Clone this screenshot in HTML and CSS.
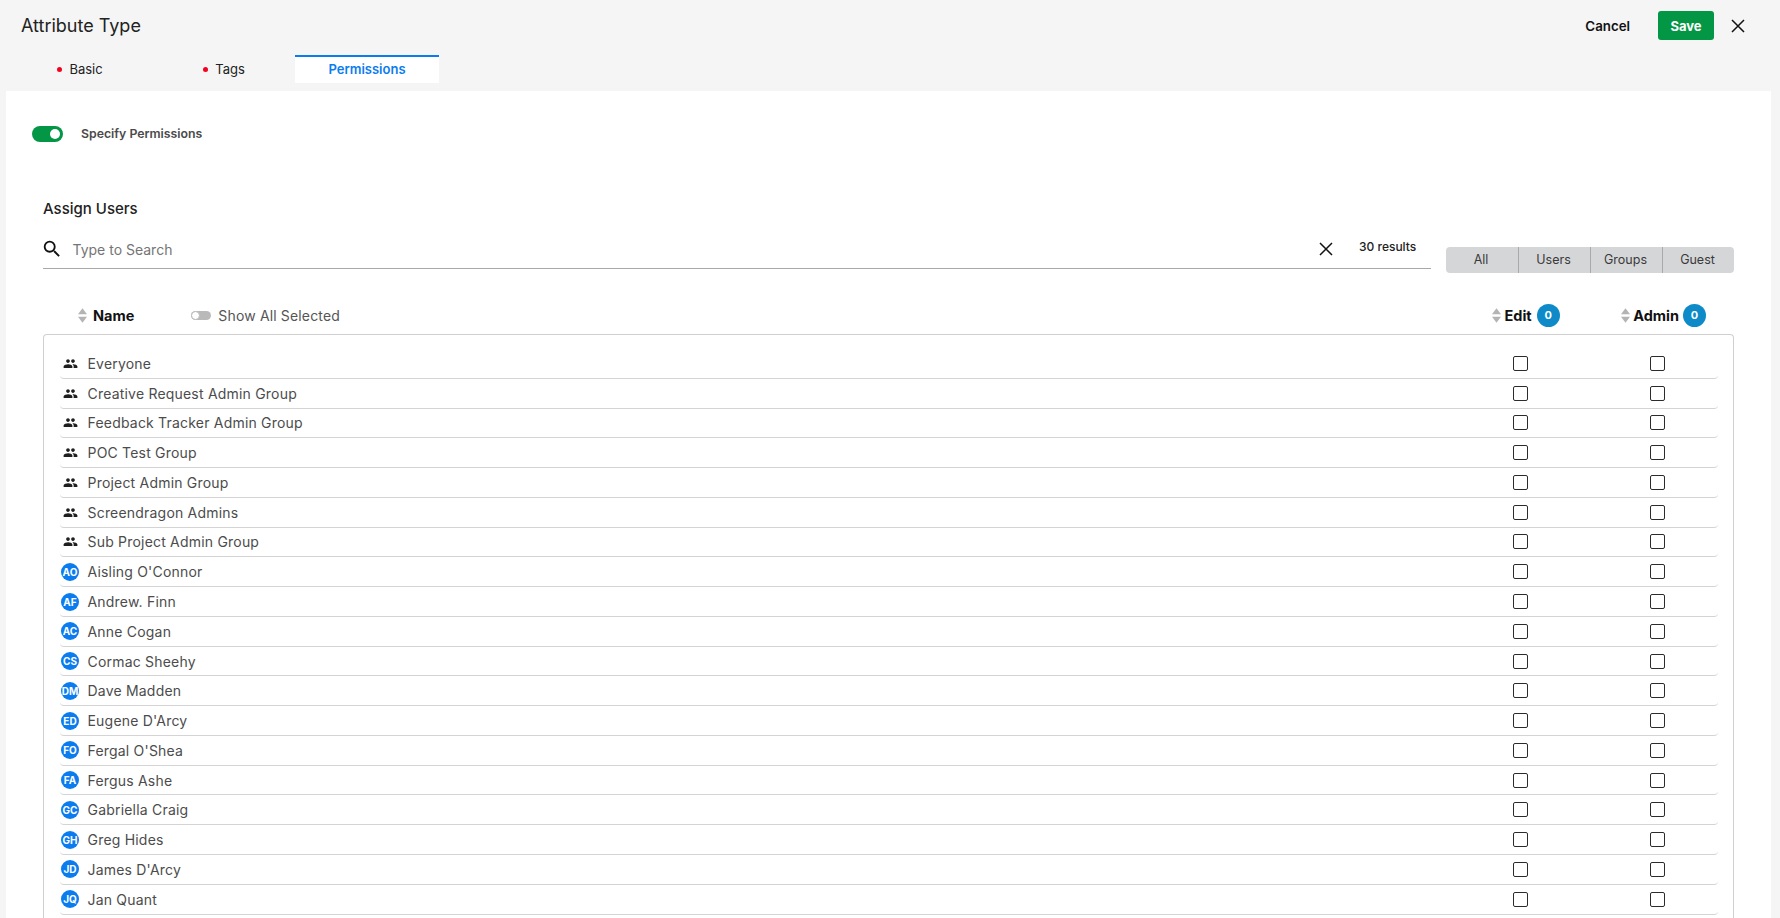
FILE: index.html
```html
<!DOCTYPE html>
<html lang="en">
<head>
<meta charset="utf-8">
<title>Attribute Type</title>
<link rel="stylesheet" href="styles.css">
</head>
<body>
<svg class="defs" width="0" height="0" aria-hidden="true">
  <symbol id="sort" viewBox="0 0 10 16"><path d="M5 0 10 6.500H0Z" fill="#b4b4b4"/><path d="M0 9.500H10L5 16Z" fill="#b4b4b4"/></symbol>
  <symbol id="people" viewBox="0 0 24 24"><path fill="#1f1f1f" d="M16 11c1.660 0 2.990-1.340 2.990-3S17.660 5 16 5s-3 1.340-3 3 1.340 3 3 3zm-8 0c1.660 0 2.990-1.340 2.990-3S9.660 5 8 5 5 6.340 5 8s1.340 3 3 3zm0 2c-2.330 0-7 1.170-7 3.500V19h14v-2.500C15 14.170 10.330 13 8 13zm8 0c-.290 0-.620.020-.970.050 1.160.840 1.970 1.970 1.970 3.450V19h6v-2.500c0-2.330-4.670-3.500-7-3.500z"/></symbol>
  <symbol id="close" viewBox="0 0 14 14"><path d="M1 1 13 13M13 1 1 13" stroke="#111" stroke-width="1.500" fill="none"/></symbol>
</svg>
<header class="topbar">
  <h1 class="title">Attribute Type</h1>
  <div class="actions">
    <button class="btn-cancel">Cancel</button>
    <button class="btn-save">Save</button>
    <svg class="close-icon"><use href="#close"/></svg>
  </div>
</header>
<nav class="tabs">
  <div class="tab"><span class="dot"></span>Basic</div>
  <div class="tab"><span class="dot"></span>Tags</div>
  <div class="tab active">Permissions</div>
</nav>
<main class="panel">
  <div class="specify">
    <span class="switch"><span class="knob"></span></span>
    <span class="specify-label">Specify Permissions</span>
  </div>
  <h2 class="assign">Assign Users</h2>
  <div class="search-row">
    <div class="search">
      <svg class="search-icon" viewBox="0 0 24 24"><path fill="#111" d="M15.500 14h-.790l-.280-.270A6.470 6.470 0 0 0 16 9.500 6.500 6.500 0 1 0 9.500 16c1.610 0 3.090-.590 4.230-1.570l.270.280v.790l5 4.990L20.490 19l-4.990-5zm-6 0C7.010 14 5 11.990 5 9.500S7.010 5 9.500 5 14 7.010 14 9.500 11.990 14 9.500 14z"/></svg>
      <span class="placeholder">Type to Search</span>
      <svg class="clear-icon"><use href="#close"/></svg>
      <span class="results">30 results</span>
    </div>
    <div class="segments">
      <span class="segment">All</span>
      <span class="segment">Users</span>
      <span class="segment">Groups</span>
      <span class="segment">Guest</span>
    </div>
  </div>
  <div class="list-head">
    <svg class="sort sort-name"><use href="#sort"/></svg>
    <span class="head-label">Name</span>
    <span class="mini-switch"><span class="mini-knob"></span></span>
    <span class="show-all">Show All Selected</span>
    <div class="head-col head-edit">
      <svg class="sort"><use href="#sort"/></svg>
      <span class="head-label">Edit</span>
      <span class="count">0</span>
    </div>
    <div class="head-col head-admin">
      <svg class="sort"><use href="#sort"/></svg>
      <span class="head-label">Admin</span>
      <span class="count count-tight">0</span>
    </div>
  </div>
  <div class="list">
    <div class="row"><span class="lead"><svg class="people"><use href="#people"/></svg></span><span class="name">Everyone</span><span class="check"></span><span class="check"></span></div>
    <div class="row"><span class="lead"><svg class="people"><use href="#people"/></svg></span><span class="name">Creative Request Admin Group</span><span class="check"></span><span class="check"></span></div>
    <div class="row"><span class="lead"><svg class="people"><use href="#people"/></svg></span><span class="name">Feedback Tracker Admin Group</span><span class="check"></span><span class="check"></span></div>
    <div class="row"><span class="lead"><svg class="people"><use href="#people"/></svg></span><span class="name">POC Test Group</span><span class="check"></span><span class="check"></span></div>
    <div class="row"><span class="lead"><svg class="people"><use href="#people"/></svg></span><span class="name">Project Admin Group</span><span class="check"></span><span class="check"></span></div>
    <div class="row"><span class="lead"><svg class="people"><use href="#people"/></svg></span><span class="name">Screendragon Admins</span><span class="check"></span><span class="check"></span></div>
    <div class="row"><span class="lead"><svg class="people"><use href="#people"/></svg></span><span class="name">Sub Project Admin Group</span><span class="check"></span><span class="check"></span></div>
    <div class="row"><span class="lead"><span class="avatar">AO</span></span><span class="name">Aisling O'Connor</span><span class="check"></span><span class="check"></span></div>
    <div class="row"><span class="lead"><span class="avatar">AF</span></span><span class="name">Andrew. Finn</span><span class="check"></span><span class="check"></span></div>
    <div class="row"><span class="lead"><span class="avatar">AC</span></span><span class="name">Anne Cogan</span><span class="check"></span><span class="check"></span></div>
    <div class="row"><span class="lead"><span class="avatar">CS</span></span><span class="name">Cormac Sheehy</span><span class="check"></span><span class="check"></span></div>
    <div class="row"><span class="lead"><span class="avatar">DM</span></span><span class="name">Dave Madden</span><span class="check"></span><span class="check"></span></div>
    <div class="row"><span class="lead"><span class="avatar">ED</span></span><span class="name">Eugene D'Arcy</span><span class="check"></span><span class="check"></span></div>
    <div class="row"><span class="lead"><span class="avatar">FO</span></span><span class="name">Fergal O'Shea</span><span class="check"></span><span class="check"></span></div>
    <div class="row"><span class="lead"><span class="avatar">FA</span></span><span class="name">Fergus Ashe</span><span class="check"></span><span class="check"></span></div>
    <div class="row"><span class="lead"><span class="avatar">GC</span></span><span class="name">Gabriella Craig</span><span class="check"></span><span class="check"></span></div>
    <div class="row"><span class="lead"><span class="avatar">GH</span></span><span class="name">Greg Hides</span><span class="check"></span><span class="check"></span></div>
    <div class="row"><span class="lead"><span class="avatar">JD</span></span><span class="name">James D'Arcy</span><span class="check"></span><span class="check"></span></div>
    <div class="row"><span class="lead"><span class="avatar">JQ</span></span><span class="name">Jan Quant</span><span class="check"></span><span class="check"></span></div>
  </div>
</main>
</body>
</html>
```
FILE: styles.css
```css
* { box-sizing: border-box; }
html, body { height: 100%; }
body {
  margin: 0;
  height: 918px;
  overflow: hidden;
  background: #f5f5f5;
  font-family: Inter, "Liberation Sans", sans-serif;
  color: #1f1f1f;
}
.defs { position: absolute; }
.topbar {
  height: 55px;
  display: flex;
  align-items: flex-start;
  justify-content: space-between;
  padding: 11px 35px 0 21px;
}
.title { margin: 3px 0 0; font-size: 18px; line-height: 23px; font-weight: 400; color: #222; }
.actions { display: flex; align-items: center; }
.btn-cancel {
  background: none; border: 0; padding: 1px 0 0; margin-right: 28px;
  font: 600 13.300px/28px Inter, sans-serif; color: #111;
}
.btn-save {
  width: 56px; height: 29px; padding: 1px 0 0; border: 0; border-radius: 3px;
  background: #039644; color: #fff;
  font: 700 13px/28px Inter, sans-serif;
}
.close-icon { width: 14px; height: 14px; margin-left: 17px; }
.tabs { height: 36px; display: flex; padding-left: 7px; align-items: flex-start; }
.tab {
  width: 144px; height: 28px;
  display: flex; align-items: center; justify-content: center;
  font-size: 13px; color: #222;
  border-top: 2px solid transparent;
  padding: 0 0 2px 2px;
}
.dot { width: 5px; height: 5px; border-radius: 50%; background: #f5001e; margin-right: 7px; }
.tab.active { background: #fff; border-top-color: #0a7cf0; color: #0a7cf0; font-weight: 600; padding-left: 0; }
.panel {
  margin: 0 9px 0 6px;
  height: 827px;
  background: #fff;
  padding: 35px 37px 0;
}
.specify { display: flex; align-items: center; height: 15px; margin-left: -11px; }
.switch { width: 31px; height: 16px; border-radius: 8px; background: #039644; position: relative; flex: none; }
.knob { position: absolute; right: 3px; top: 3px; width: 10px; height: 10px; background: #fff; border-radius: 50%; }
.specify-label { margin-left: 18px; font-size: 12.300px; font-weight: 600; color: #4a4a4a; }
.assign { margin: 58px 0 0; font-size: 15px; line-height: 20px; font-weight: 500; color: #222; }
.search-row { display: flex; margin-top: 9px; height: 46px; }
.search {
  width: 1388px; height: 41px;
  border-bottom: 1px solid #a8a8a8;
  display: flex; align-items: center;
  padding-top: 2px;
}
.search-icon { width: 22px; height: 22px; margin-left: -2px; flex: none; }
.placeholder { margin-left: 9.500px; font-size: 14px; color: #757575; flex: 1; }
.clear-icon { width: 14px; height: 14px; flex: none; margin-left: auto; }
.results { width: 72px; margin-left: 26px; margin-top: -6px; font-size: 12px; font-weight: 500; color: #222; }
.segments {
  margin: 19px 0 0 15px; width: 288px; height: 26px;
  background: #d5d6d8; border-radius: 4px;
  display: flex;
}
.segment {
  flex: 0 0 72px; font-size: 12.500px; line-height: 26px; text-align: center; color: #3a3a3a;
  border-left: 1px solid #a9a9a9;
  padding-right: 2px;
}
.segment:first-child { border-left: 0; }
.list-head { display: flex; align-items: center; height: 22px; margin-top: 30px; margin-bottom: 8px; padding-left: 35px; }
.sort { width: 9px; height: 15px; flex: none; }
.head-label { font-size: 14.500px; font-weight: 700; color: #111; margin-left: 6px; }
.mini-switch { margin-left: 57px; width: 20px; height: 9px; border-radius: 5px; background: #b9b9b9; position: relative; flex: none; }
.mini-knob { position: absolute; left: 0; top: 0; width: 9px; height: 9px; background: #fff; border: 1px solid #b9b9b9; border-radius: 50%; }
.show-all { margin-left: 7px; font-size: 14px; color: #555; letter-spacing: .15px; }
.head-col { display: flex; align-items: center; }
.head-col .head-label { margin-left: 3px; }
.head-edit { margin-left: auto; }
.head-admin { margin-left: 61.500px; margin-right: 28px; }
.count {
  width: 23px; height: 23px; border-radius: 50%; margin-left: 5px;
  background: #0d8ac7; color: #fff;
  font-size: 11px; font-weight: 700; line-height: 23px; text-align: center;
}
.count-tight { margin-left: 4px; }
.list {
  height: 584px;
  border: 1px solid #cfcfcf; border-bottom: 0; border-radius: 4px 4px 0 0;
  padding: 14px 15px 0 16px;
}
.row {
  height: 29.780px;
  display: flex; align-items: center;
  border-bottom: 1.500px solid #d4d4d4;
  border-radius: 0 0 4px 4px;
}
.lead { width: 27.500px; display: flex; align-items: center; padding-left: 1px; flex: none; }
.people { width: 15px; height: 15px; margin-left: 2px; }
.avatar {
  width: 18px; height: 18px; border-radius: 50%;
  background: #0a7cf0; color: #fff;
  font-size: 10px; font-weight: 700; line-height: 18px; text-align: center;
  white-space: nowrap; overflow: hidden;
}
.name { flex: 1; font-size: 14px; color: #4c4c4c; letter-spacing: .2px; }
.check { width: 15px; height: 15px; border: 1.500px solid #2b2b2b; border-radius: 2px; flex: none; }
.check:nth-last-child(2) { margin-right: 122px; }
.check:last-child { margin-right: 53px; }
```
